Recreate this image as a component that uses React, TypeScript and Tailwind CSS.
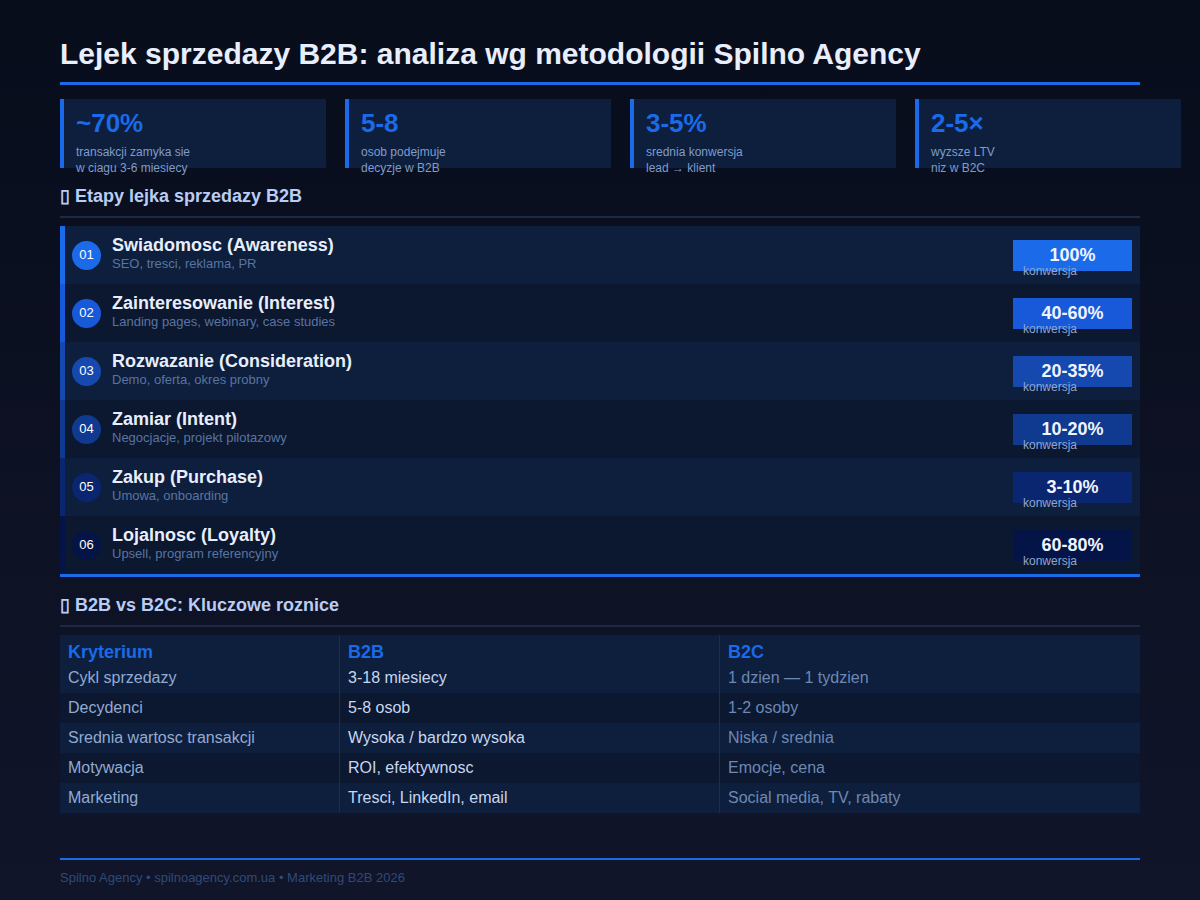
const stats = [
  { v: "~70%", l: ["transakcji zamyka sie", "w ciagu 3-6 miesiecy"] },
  { v: "5-8", l: ["osob podejmuje", "decyzje w B2B"] },
  { v: "3-5%", l: ["srednia konwersja", "lead → klient"] },
  { v: "2-5×", l: ["wyzsze LTV", "niz w B2C"] },
];

const stages = [
  { t: "Swiadomosc (Awareness)", d: "SEO, tresci, reklama, PR", p: "100%", c: "bg-[#1a6aea]", b: "border-[#1a6aea]" },
  { t: "Zainteresowanie (Interest)", d: "Landing pages, webinary, case studies", p: "40-60%", c: "bg-[#1759d8]", b: "border-[#1759d8]" },
  { t: "Rozwazanie (Consideration)", d: "Demo, oferta, okres probny", p: "20-35%", c: "bg-[#1549b0]", b: "border-[#1549b0]" },
  { t: "Zamiar (Intent)", d: "Negocjacje, projekt pilotazowy", p: "10-20%", c: "bg-[#0f3a8f]", b: "border-[#0f3a8f]" },
  { t: "Zakup (Purchase)", d: "Umowa, onboarding", p: "3-10%", c: "bg-[#0a2670]", b: "border-[#0a2670]" },
  { t: "Lojalnosc (Loyalty)", d: "Upsell, program referencyjny", p: "60-80%", c: "bg-[#051447]", b: "border-[#051447]" },
];

const rows = [
  ["Cykl sprzedazy", "3-18 miesiecy", "1 dzien — 1 tydzien"],
  ["Decydenci", "5-8 osob", "1-2 osoby"],
  ["Srednia wartosc transakcji", "Wysoka / bardzo wysoka", "Niska / srednia"],
  ["Motywacja", "ROI, efektywnosc", "Emocje, cena"],
  ["Marketing", "Tresci, LinkedIn, email", "Social media, TV, rabaty"],
];

export default function App() {
  return (
    <div className="h-[900px] w-[1200px] overflow-hidden bg-gradient-to-b from-[#080d1c] to-[#11152a] px-[60px] pt-[34px] font-[family-name:Liberation_Sans,Arial,sans-serif]">
      <h1 className="border-b-[3px] border-[#1a6aea] pb-[8px] text-[30px] font-bold leading-[40px] text-[#e8eefc]">
        Lejek sprzedazy B2B: analiza wg metodologii Spilno Agency
      </h1>

      <div className="mt-[14px] flex gap-[19px]">
        {stats.map((s) => (
          <div key={s.v} className="h-[69px] w-[266px] shrink-0 border-l-4 border-[#1a6aea] bg-[#0d1f3c] pl-[12px] pt-[9px]">
            <div className="text-[26px] font-bold leading-[30px] text-[#1a6aea]">{s.v}</div>
            <div className="mt-[6px] text-[12px] leading-[16px] text-[#7f9ccc]">
              {s.l[0]}
              <br />
              {s.l[1]}
            </div>
          </div>
        ))}
      </div>

      <h2 className="mt-[16px] border-b-2 border-[#1c2a45] pb-[8px] text-[18px] font-bold leading-[24px] text-[#b9cdf4]">
        ▯ Etapy lejka sprzedazy B2B
      </h2>

      <div className="mt-[8px] border-b-[3px] border-[#1a6aea]">
        {stages.map((s, i) => (
          <div
            key={s.t}
            className={`flex h-[58px] items-center border-l-[5px] pl-[7px] pr-[8px] ${s.b} ${i % 2 === 0 ? "bg-[#0d1f3c]" : "bg-[#0b1830]"}`}
          >
            <div className={`flex h-[29px] w-[29px] items-center justify-center rounded-full text-[13px] text-white ${s.c}`}>
              {String(i + 1).padStart(2, "0")}
            </div>
            <div className="ml-[11px] flex-1 -mt-[4px]">
              <div className="text-[18px] font-bold leading-[22px] text-[#e8eefc]">{s.t}</div>
              <div className="text-[13px] leading-[16px] text-[#5a74a0]">{s.d}</div>
            </div>
            <div className={`relative h-[31px] w-[119px] ${s.c}`}>
              <div className="text-center text-[18px] font-bold leading-[31px] text-[#f0f4ff]">{s.p}</div>
              <div className="absolute left-[10px] top-[24px] text-[12px] leading-[14px] text-[#8fa6cc]">konwersja</div>
            </div>
          </div>
        ))}
      </div>

      <h2 className="mt-[16px] border-b-2 border-[#1c2a45] pb-[8px] text-[18px] font-bold leading-[24px] text-[#b9cdf4]">
        ▯ B2B vs B2C: Kluczowe roznice
      </h2>

      <div className="mt-[8px] text-[16px]">
        <div className="grid grid-cols-[280px_380px_1fr] bg-[#0d1f3c]">
          <div className="border-r border-[#1c2e4d] px-[8px] pt-[6px] text-[18px] font-bold leading-[22px] text-[#1a6aea]">Kryterium</div>
          <div className="border-r border-[#1c2e4d] px-[8px] pt-[6px] text-[18px] font-bold leading-[22px] text-[#1a6aea]">B2B</div>
          <div className="px-[8px] pt-[6px] text-[18px] font-bold leading-[22px] text-[#1a6aea]">B2C</div>
        </div>
        {rows.map((r, i) => (
          <div key={r[0]} className={`grid h-[30px] grid-cols-[280px_380px_1fr] items-center ${i % 2 === 0 ? "bg-[#0d1f3c]" : "bg-[#0b1830]"}`}>
            <div className="flex h-full items-center border-r border-[#1c2e4d] px-[8px] text-[#93aad2]">{r[0]}</div>
            <div className="flex h-full items-center border-r border-[#1c2e4d] px-[8px] text-[#c8d6f0]">{r[1]}</div>
            <div className="px-[8px] text-[#6f88b4]">{r[2]}</div>
          </div>
        ))}
      </div>

      <div className="mt-[45px] border-t-2 border-[#1a6aea] pt-[8px] text-[13px] text-[#2f4a78]">
        Spilno Agency • spilnoagency.com.ua • Marketing B2B 2026
      </div>
    </div>
  );
}
